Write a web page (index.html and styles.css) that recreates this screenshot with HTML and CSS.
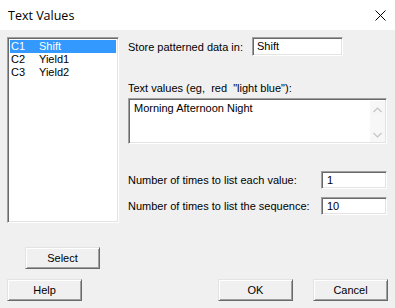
FILE: index.html
```html
<!DOCTYPE html>
<html lang="en">
<head>
  <meta charset="UTF-8">
  <title>Text Values</title>
  <link rel="stylesheet" href="styles.css">
</head>
<body>
  <div class="dialog">
    <!-- Title bar -->
    <div class="titlebar">
      <span class="title">Text Values</span>
      <svg class="close" width="11" height="11" viewBox="0 0 11 11">
        <path d="M0.5 0.5 L10.5 10.5 M10.5 0.5 L0.5 10.5" stroke="#000" stroke-width="1" fill="none"/>
      </svg>
    </div>

    <div class="body">
      <div class="main">
        <!-- Column list -->
        <div class="left">
          <div class="list">
            <div class="item selected"><span class="col">C1</span>Shift</div>
            <div class="item"><span class="col">C2</span>Yield1</div>
            <div class="item"><span class="col">C3</span>Yield2</div>
          </div>
          <div class="btn select">Select</div>
        </div>

        <!-- Options -->
        <div class="right">
          <div class="store">
            <span class="store-label">Store patterned data in:</span>
            <div class="field store-field">Shift</div>
          </div>

          <div class="tv-label">Text values (eg,&nbsp; red&nbsp; "light blue"):</div>
          <div class="field textbox">
            <span class="tv-text">Morning Afternoon Night</span>
            <div class="scroll">
              <svg width="9" height="6" viewBox="0 0 9 6"><path d="M0.5 5 L4.5 1 L8.5 5" stroke="#c4c4c4" stroke-width="1.2" fill="none"/></svg>
              <svg width="9" height="6" viewBox="0 0 9 6"><path d="M0.5 1 L4.5 5 L8.5 1" stroke="#c4c4c4" stroke-width="1.2" fill="none"/></svg>
            </div>
          </div>

          <div class="count first">
            <span>Number of times to list each value:</span>
            <div class="field count-field">1</div>
          </div>
          <div class="count">
            <span>Number of times to list the sequence:</span>
            <div class="field count-field">10</div>
          </div>
        </div>
      </div>

      <!-- Bottom buttons -->
      <div class="buttons">
        <div class="btn">Help</div>
        <div class="btn ok">OK</div>
        <div class="btn">Cancel</div>
      </div>
    </div>
  </div>
</body>
</html>
```

FILE: styles.css
```css
/* General */
body, html {
  margin: 0;
  padding: 0;
  font-family: Tahoma, "Liberation Sans", Arial, sans-serif;
  font-size: 11px;
  color: #000;
  overflow: hidden;
}

.dialog {
  width: 395px;
  height: 308px;
  display: flex;
  flex-direction: column;
}

/* Title bar */
.titlebar {
  height: 30px;
  background: #fff;
  display: flex;
  align-items: center;
  justify-content: space-between;
  padding: 0 9px 0 8px;
  flex-shrink: 0;
}

.title {
  font-family: "Open Sans", "Noto Sans", sans-serif;
  font-size: 12.5px;
}

/* Dialog body */
.body {
  flex: 1;
  background: #f0f0f0;
  padding: 7px 7px 0 7px;
  display: flex;
  flex-direction: column;
}

.main {
  display: flex;
  gap: 9px;
}

.left {
  width: 112px;
  display: flex;
  flex-direction: column;
}

/* Sunken boxes */
.list, .field {
  box-sizing: border-box;
  background: #fff;
  border: 1px solid;
  border-color: #a0a0a0 #fff #fff #a0a0a0;
  box-shadow: inset 1px 1px #696969, inset -1px -1px #e3e3e3;
}

.list {
  height: 186px;
  padding: 2px;
}

.item {
  height: 13px;
  line-height: 13px;
  padding-left: 1px;
  white-space: nowrap;
}

.item.selected {
  background: #3399ff;
  color: #fff;
}

.col {
  display: inline-block;
  width: 28px;
}

/* Raised buttons */
.btn {
  box-sizing: border-box;
  width: 75px;
  height: 22px;
  line-height: 20px;
  text-align: center;
  background: #f0f0f0;
  border: 1px solid;
  border-color: #e3e3e3 #696969 #696969 #e3e3e3;
  box-shadow: inset 1px 1px #fff, inset -1px -1px #a0a0a0;
}

.btn.select {
  margin: 24px 0 0 18px;
}

/* Right column */
.right {
  flex: 1;
  display: flex;
  flex-direction: column;
}

.store {
  display: flex;
  align-items: center;
}

.store-label {
  width: 124px;
}

.store-field {
  width: 91px;
  height: 19px;
  line-height: 17px;
  padding-left: 4px;
}

.tv-label {
  margin-top: 25px;
  line-height: 14px;
}

.textbox {
  margin-top: 3px;
  height: 46px;
  width: 259px;
  display: flex;
  justify-content: space-between;
  padding: 2px 1px 1px 5px;
}

.tv-text {
  line-height: 13px;
  margin-top: 1px;
}

.scroll {
  width: 15px;
  background: #f7f7f7;
  display: flex;
  flex-direction: column;
  justify-content: space-between;
  align-items: center;
  padding: 6px 0 4px;
}

.count {
  display: flex;
  align-items: center;
  justify-content: space-between;
  margin-top: 8px;
  padding-right: 1px;
}

.count.first {
  margin-top: 27px;
}

.count-field {
  width: 66px;
  height: 18px;
  line-height: 16px;
  padding-left: 5px;
}

/* Bottom row */
.buttons {
  display: flex;
  gap: 20px;
  margin-top: 10px;
}

.buttons .ok {
  margin-left: auto;
}
```
